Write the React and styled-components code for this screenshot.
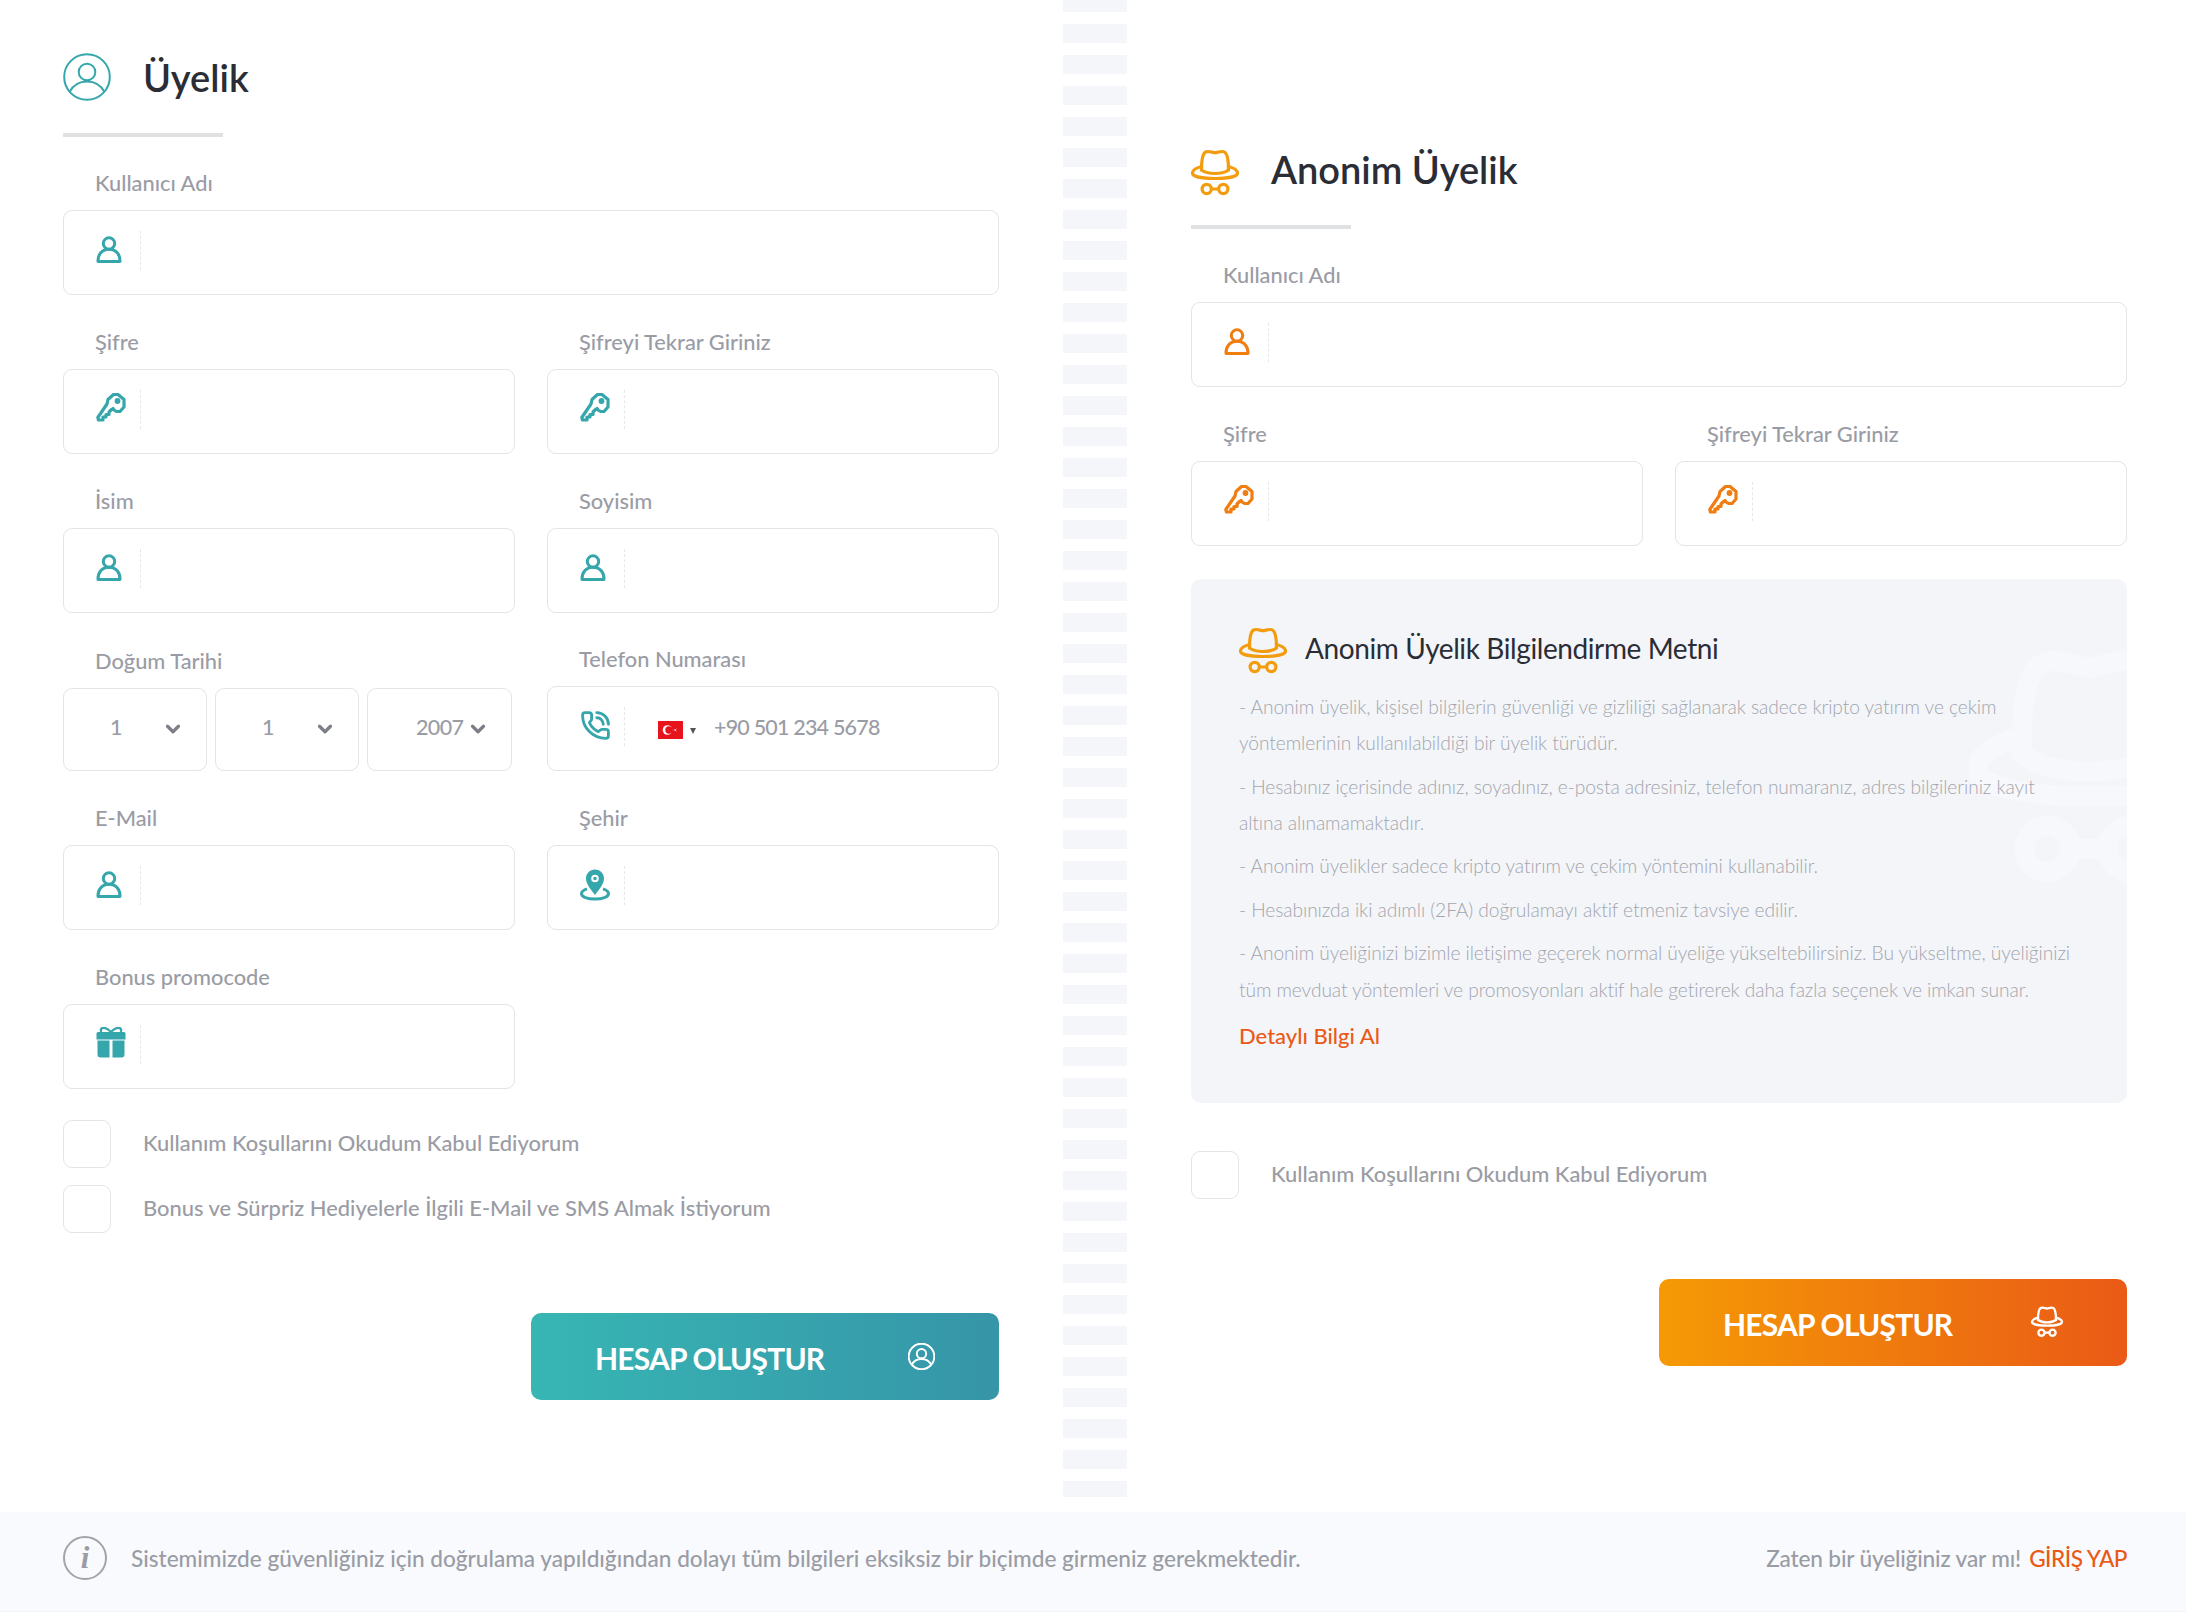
import React from 'react'
import styled, { createGlobalStyle } from 'styled-components'
import { PhoneCall, ChevronDown } from 'lucide-react'

const TEAL = '#35a6ab'
const ORANGE = '#ef7d10'
const FONT = `Lato, "Liberation Sans", sans-serif`

const Global = createGlobalStyle`
  html, body { margin: 0; padding: 0; background: #fff; }
  body { font-family: ${FONT}; }
  * { box-sizing: border-box; }
`

const Page = styled.div`
  width: 2186px;
  height: 1612px;
  overflow: hidden;
  display: flex;
  flex-direction: column;
`
const Main = styled.div`
  height: 1512px;
  padding: 0 59px 0 63px;
  display: grid;
  grid-template-columns: 936px 64px 936px;
  column-gap: 64px;
`
const Stripes = styled.div`
  height: 1497px;
  background-image: linear-gradient(#f4f6f9 0 18.5px, transparent 18.5px 31px);
  background-size: 100% 31px;
  background-position: 0 -7px;
`
const Column = styled.section`
  padding-top: ${p => p.$top}px;
  display: flex;
  flex-direction: column;
`
const Head = styled.div`
  display: flex;
  align-items: center;
  gap: 32px;
  height: 48px;
`
const HeadIcon = styled.div`
  display: flex;
  margin-top: ${p => p.$drop || 0}px;
`
const Title = styled.h1`
  margin: 0;
  font-size: 38px;
  font-weight: 600;
  color: #2b2d36;
`
const Underline = styled.div`
  width: 160px;
  height: 4px;
  margin: 32px 0 25px;
  background: #e0e1e3;
`
const Rows = styled.div`
  display: grid;
  grid-template-columns: repeat(2, 452px);
  column-gap: 32px;
  row-gap: 25.8px;
`
const Field = styled.div`
  grid-column: ${p => (p.$wide ? '1 / -1' : 'auto')};
  padding-top: ${p => p.$drop || 0}px;
`
const Label = styled.div`
  height: 40px;
  margin-bottom: 8px;
  padding-left: 32px;
  line-height: 42px;
  font-size: 21.8px;
  font-weight: 500;
  color: #9a9ca5;
`
const InputBox = styled.div`
  height: 85px;
  padding: 20px 0 0 32px;
  display: flex;
  align-items: flex-start;
  border: 1.5px solid #e3e4e6;
  border-radius: 9px;
  background: #fff;
`
const IconSlot = styled.div`
  width: 45px;
  height: 39px;
  padding-bottom: 2px;
  flex: none;
  display: flex;
  align-items: center;
  border-right: 1.5px dashed #e6e7e9;
`
const TextInput = styled.input`
  flex: 1;
  min-width: 0;
  height: 39px;
  border: 0;
  outline: 0;
  background: transparent;
`
const Flag = styled.svg`
  margin: 14px 0 0 33px;
  flex: none;
`
const Caret = styled.div`
  margin: 21px 0 0 7px;
  width: 0;
  height: 0;
  border: 3.5px solid transparent;
  border-top: 6px solid #555;
  border-bottom: 0;
`
const Phone = styled.div`
  margin-left: 18px;
  line-height: 40px;
  font-size: 21.5px;
  font-weight: 500;
  letter-spacing: -0.8px;
  color: #9a9ca5;
`
const Dates = styled.div`
  display: grid;
  grid-template-columns: 144px 144px 145px;
  column-gap: 8px;
`
const Select = styled.div`
  height: 83px;
  padding: 0 22px 6px ${p => p.$left}px;
  display: flex;
  align-items: center;
  justify-content: space-between;
  border: 1.5px solid #e3e4e6;
  border-radius: 9px;
  font-size: 21.5px;
  font-weight: 500;
  letter-spacing: -0.6px;
  color: #9a9ca5;
  svg { color: #7d7f88; margin-top: 4px; }
`
const Checks = styled.div`
  margin-top: ${p => p.$top}px;
  display: flex;
  flex-direction: column;
  gap: 17px;
`
const Check = styled.label`
  display: flex;
  align-items: center;
  gap: 32px;
  height: 48px;
  font-size: 21.9px;
  font-weight: 500;
  color: #9a9ca5;
  span { margin-top: -3px; }
`
const Box = styled.div`
  width: 48px;
  height: 48px;
  border: 1.5px solid #e3e4e6;
  border-radius: 9px;
`
const Button = styled.button`
  align-self: flex-end;
  width: 468px;
  height: 87px;
  margin-top: ${p => p.$top}px;
  padding: 0 64px;
  display: flex;
  align-items: center;
  justify-content: space-between;
  border: 0;
  border-radius: 10px;
  background: ${p => p.$bg};
  color: #fff;
  font-family: ${FONT};
  font-size: 30px;
  font-weight: 700;
  letter-spacing: -0.8px;
`
const ButtonText = styled.span`
  margin-top: 4px;
`
const Info = styled.div`
  position: relative;
  overflow: hidden;
  height: 524px;
  margin-top: 33px;
  padding: 48px 48px 0;
  border-radius: 10px;
  background: #f3f5f9;
`
const Watermark = styled.div`
  position: absolute;
  left: 778px;
  top: 70px;
  opacity: 0.35;
`
const InfoHead = styled.div`
  position: relative;
  display: flex;
  align-items: center;
  gap: 18px;
  margin-bottom: 14px;
`
const InfoTitle = styled.h2`
  margin: 0 0 6px;
  font-size: 28px;
  font-weight: 400;
  letter-spacing: -0.4px;
  color: #2b2d36;
`
const Para = styled.p`
  position: relative;
  margin: 0 0 7px;
  font-size: 19.2px;
  font-weight: 300;
  letter-spacing: -0.08px;
  line-height: 36.4px;
  color: #a3a5ad;
`
const More = styled.a`
  position: relative;
  display: block;
  margin-top: 14px;
  font-size: 22px;
  font-weight: 500;
  color: #ea5a16;
`
const Footer = styled.footer`
  height: 100px;
  padding: 0 59px 8px 63px;
  display: flex;
  align-items: center;
  justify-content: space-between;
  background: #f8fafd;
  box-shadow: inset 0 -1px #f2f3f5;
  font-size: 22.6px;
  font-weight: 500;
  color: #9a9ca5;
`
const Notice = styled.div`
  display: flex;
  align-items: center;
  gap: 24px;
`
const InfoMark = styled.div`
  width: 44px;
  height: 44px;
  display: flex;
  align-items: center;
  justify-content: center;
  border: 2px solid #a2a4ac;
  border-radius: 50%;
  font-family: "Liberation Serif", serif;
  font-style: italic;
  font-weight: 700;
  font-size: 31px;
  color: #9a9ca5;
`
const LoginNote = styled.div`
  letter-spacing: -0.15px;
`
const Login = styled.a`
  margin-left: 8px;
  letter-spacing: -0.5px;
  color: #ea5a16;
`

const PersonIcon = ({ color }) => (
  <svg width="26" height="27" viewBox="0 0 26 27" fill="none" stroke={color} strokeWidth="3">
    <circle cx="13" cy="7.5" r="5.7" />
    <path d="M2 25.5h22c.3-7-4-12.3-11-12.3S1.700 18.500 2 25.500z" strokeLinejoin="round" />
  </svg>
)

const KeyIcon = ({ color }) => (
  <svg width="30" height="32" viewBox="0 0 30 32" fill="none" stroke={color} strokeWidth="3.200" strokeLinejoin="round">
    <path d="M11 12 12 7.500 17.500 2.500h4.500L28 7.500v7.500L24 19.500h-3.500L18 18l-1-1.500-1.500 1L13 20v2.500h-3V25H7v3H2.500L1.800 25.500z" />
    <circle cx="21.500" cy="9" r="1.300" fill={color} />
  </svg>
)

const PinIcon = ({ color }) => (
  <svg width="30" height="32" viewBox="0 0 30 32" fill="none">
    <path d="M15 .5C9.800.5 6 4.600 6 9.600 6 15.500 12 22 15 26c3-4 9-10.500 9-16.400C24 4.600 20.200.5 15 .5z" fill={color} />
    <circle cx="15" cy="9.500" r="2.800" stroke="#fff" strokeWidth="2" />
    <path d="M7 19.800C3.500 21 1.500 22.500 1.500 24.500c0 3.500 6 5.500 13.500 5.500s13.500-2 13.500-5.500c0-2-2-3.500-5.500-4.700" stroke={color} strokeWidth="3" />
  </svg>
)

const GiftIcon = ({ color }) => (
  <svg width="30" height="32" viewBox="0 0 30 32" fill={color}>
    <path d="M2 5h26a1.500 1.500 0 0 1 1.500 1.500v6H.5v-6A1.500 1.500 0 0 1 2 5zM1.500 13.500h12V30.500H4.500a3 3 0 0 1-3-3zM16.500 13.500h12v14a3 3 0 0 1-3 3h-9z" />
    <path d="M15 5C12 2 9 .5 6.500 1 4.500 1.500 4.500 4 5.500 5M15 5c3-3 6-4.500 8.500-4 2 .5 2 3 1 4" fill="none" stroke={color} strokeWidth="2.400" />
  </svg>
)

const HatIcon = ({ size, color, stroke = 3.2 }) => (
  <svg width={size} height={size} viewBox="0 0 48 48" fill="none" stroke={color} strokeWidth={stroke} strokeLinecap="round" strokeLinejoin="round">
    <path d="M10.500 21C10.500 12 11 5 14.500 3 17 1.500 20 3 24 3.800 28 3 31 1.500 33.500 3 37 5 37.500 12 37.500 21" />
    <path d="M10.500 17.500C5 19 1.500 21.500 1.500 24c0 3.500 10.500 5.500 22.500 5.500S46.500 27.500 46.500 24c0-2.500-3.500-5-9-6.500" />
    <path d="M10.500 21c3.500 2.500 8.500 3.500 13.500 3.500s10-1 13.500-3.500" />
    <circle cx="15.700" cy="40" r="4.600" />
    <circle cx="32.300" cy="40" r="4.600" />
    <path d="M20.500 40h7" />
  </svg>
)

const UserCircle = ({ size, color, stroke = 2 }) => (
  <svg width={size} height={size} viewBox="0 0 48 48" fill="none" stroke={color} strokeWidth={stroke}>
    <circle cx="24" cy="24" r="22.800" />
    <circle cx="24" cy="19" r="8.300" />
    <path d="M6.500 39C10 32.500 16 28.500 24 28.500S38 32.500 41.500 39" />
  </svg>
)

const TurkeyFlag = () => (
  <Flag width="25" height="18" viewBox="0 0 25 18">
    <rect width="25" height="18" fill="#e8141c" />
    <circle cx="9.500" cy="9" r="4.800" fill="#fff" />
    <circle cx="11" cy="9" r="3.700" fill="#e8141c" />
    <path d="m15.500 9 3.500-1.400-1.500 1.400 1.500 1.400z" fill="#fff" />
  </Flag>
)

const icons = {
  person: PersonIcon,
  key: KeyIcon,
  pin: PinIcon,
  gift: GiftIcon,
}

const InputField = ({ label, icon, color, wide }) => {
  const Icon = icons[icon]
  return (
    <Field $wide={wide}>
      <Label>{label}</Label>
      <InputBox>
        <IconSlot><Icon color={color} /></IconSlot>
        <TextInput />
      </InputBox>
    </Field>
  )
}

const DateSelect = ({ value, left }) => (
  <Select $left={left}>
    {value}
    <ChevronDown size={22} strokeWidth={3.500} />
  </Select>
)

const App = () => (
  <Page>
    <Global />
    <Main>
      <Column $top={53}>
        <Head>
          <HeadIcon><UserCircle size={48} color={TEAL} /></HeadIcon>
          <Title>Üyelik</Title>
        </Head>
        <Underline />
        <Rows>
          <InputField wide label="Kullanıcı Adı" icon="person" color={TEAL} />
          <InputField label="Şifre" icon="key" color={TEAL} />
          <InputField label="Şifreyi Tekrar Giriniz" icon="key" color={TEAL} />
          <InputField label="İsim" icon="person" color={TEAL} />
          <InputField label="Soyisim" icon="person" color={TEAL} />
          <Field $drop={2}>
            <Label>Doğum Tarihi</Label>
            <Dates>
              <DateSelect value="1" left={46} />
              <DateSelect value="1" left={46} />
              <DateSelect value="2007" left={48} />
            </Dates>
          </Field>
          <Field>
            <Label>Telefon Numarası</Label>
            <InputBox>
              <IconSlot><PhoneCall size={31} color={TEAL} strokeWidth={2.200} /></IconSlot>
              <TurkeyFlag />
              <Caret />
              <Phone>+90 501 234 5678</Phone>
            </InputBox>
          </Field>
          <InputField label="E-Mail" icon="person" color={TEAL} />
          <InputField label="Şehir" icon="pin" color={TEAL} />
          <InputField label="Bonus promocode" icon="gift" color={TEAL} />
        </Rows>
        <Checks $top={31}>
          <Check><Box /><span>Kullanım Koşullarını Okudum Kabul Ediyorum</span></Check>
          <Check><Box /><span>Bonus ve Sürpriz Hediyelerle İlgili E-Mail ve SMS Almak İstiyorum</span></Check>
        </Checks>
        <Button $top={80} $bg="linear-gradient(90deg, #37b6b4, #3695a8)">
          <ButtonText>HESAP OLUŞTUR</ButtonText>
          <UserCircle size={27} color="#fff" stroke={3.500} />
        </Button>
      </Column>
      <Stripes />
      <Column $top={145}>
        <Head>
          <HeadIcon $drop={8}><HatIcon size={48} color="#f29c0e" /></HeadIcon>
          <Title>Anonim Üyelik</Title>
        </Head>
        <Underline />
        <Rows>
          <InputField wide label="Kullanıcı Adı" icon="person" color={ORANGE} />
          <InputField label="Şifre" icon="key" color={ORANGE} />
          <InputField label="Şifreyi Tekrar Giriniz" icon="key" color={ORANGE} />
        </Rows>
        <Info>
          <Watermark><HatIcon size={240} color="#fff" stroke={4} /></Watermark>
          <InfoHead>
            <HatIcon size={48} color="#f29c0e" />
            <InfoTitle>Anonim Üyelik Bilgilendirme Metni</InfoTitle>
          </InfoHead>
          <Para>- Anonim üyelik, kişisel bilgilerin güvenliği ve gizliliği sağlanarak sadece kripto yatırım ve çekim yöntemlerinin kullanılabildiği bir üyelik türüdür.</Para>
          <Para>- Hesabınız içerisinde adınız, soyadınız, e-posta adresiniz, telefon numaranız, adres bilgileriniz kayıt altına alınamamaktadır.</Para>
          <Para>- Anonim üyelikler sadece kripto yatırım ve çekim yöntemini kullanabilir.</Para>
          <Para>- Hesabınızda iki adımlı (2FA) doğrulamayı aktif etmeniz tavsiye edilir.</Para>
          <Para>- Anonim üyeliğinizi bizimle iletişime geçerek normal üyeliğe yükseltebilirsiniz. Bu yükseltme, üyeliğinizi tüm mevduat yöntemleri ve promosyonları aktif hale getirerek daha fazla seçenek ve imkan sunar.</Para>
          <More>Detaylı Bilgi Al</More>
        </Info>
        <Checks $top={48}>
          <Check><Box /><span>Kullanım Koşullarını Okudum Kabul Ediyorum</span></Check>
        </Checks>
        <Button $top={80} $bg="linear-gradient(90deg, #f59a05, #ea5a16)">
          <ButtonText>HESAP OLUŞTUR</ButtonText>
          <HatIcon size={32} color="#fff" stroke={3.500} />
        </Button>
      </Column>
    </Main>
    <Footer>
      <Notice>
        <InfoMark>i</InfoMark>
        Sistemimizde güvenliğiniz için doğrulama yapıldığından dolayı tüm bilgileri eksiksiz bir biçimde girmeniz gerekmektedir.
      </Notice>
      <LoginNote>Zaten bir üyeliğiniz var mı!<Login>GİRİŞ YAP</Login></LoginNote>
    </Footer>
  </Page>
)

export default App
